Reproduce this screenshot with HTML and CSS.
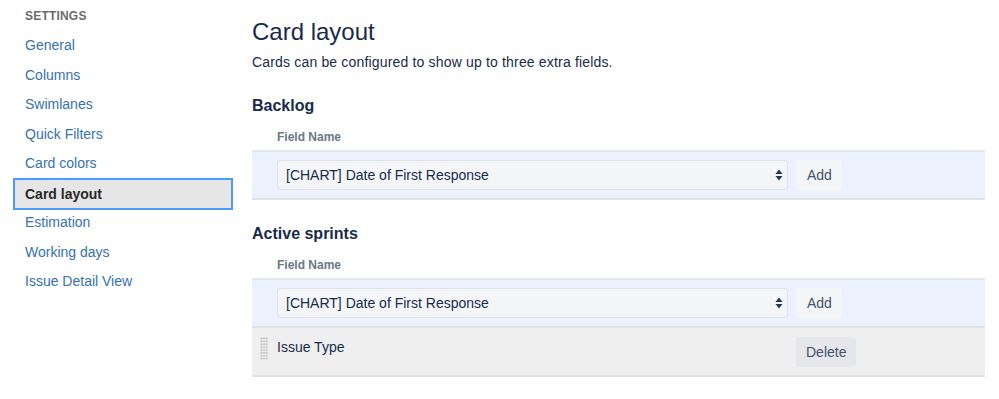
FILE: index.html
```html
<!DOCTYPE html>
<html lang="en">
<head>
    <meta charset="UTF-8">
    <title>Card layout</title>
    <link rel="stylesheet" href="styles.css">
</head>
<body>
    <div class="page">
        <nav class="sidebar">
            <h4 class="sidebar-title">Settings</h4>
            <a class="nav-item" href="#">General</a>
            <a class="nav-item" href="#">Columns</a>
            <a class="nav-item" href="#">Swimlanes</a>
            <a class="nav-item" href="#">Quick Filters</a>
            <a class="nav-item" href="#">Card colors</a>
            <a class="nav-item selected" href="#">Card layout</a>
            <a class="nav-item" href="#">Estimation</a>
            <a class="nav-item" href="#">Working days</a>
            <a class="nav-item" href="#">Issue Detail View</a>
        </nav>

        <main class="content">
            <h1>Card layout</h1>
            <p class="intro">Cards can be configured to show up to three extra fields.</p>

            <h2>Backlog</h2>
            <div class="field-label">Field Name</div>
            <div class="row add-row">
                <div class="select">
                    <span>[CHART] Date of First Response</span>
                    <svg width="8" height="12" viewBox="0 0 8 12"><path d="M4 0.5 L7.5 5 H0.5 Z M4 11.5 L7.5 7 H0.5 Z" fill="#253858"/></svg>
                </div>
                <button class="btn">Add</button>
            </div>

            <h2>Active sprints</h2>
            <div class="field-label">Field Name</div>
            <div class="row add-row">
                <div class="select">
                    <span>[CHART] Date of First Response</span>
                    <svg width="8" height="12" viewBox="0 0 8 12"><path d="M4 0.5 L7.5 5 H0.5 Z M4 11.5 L7.5 7 H0.5 Z" fill="#253858"/></svg>
                </div>
                <button class="btn">Add</button>
            </div>
            <div class="row field-row">
                <span class="handle"></span>
                <span class="field-name">Issue Type</span>
                <button class="btn">Delete</button>
            </div>
        </main>
    </div>
</body>
</html>
```

FILE: styles.css
```css
body { margin: 0; font-family: "Liberation Sans", Arial, sans-serif; font-size: 14px; color: #172b4d; background: #fff; }
.page { display: flex; }

.sidebar { width: 239px; padding-left: 13px; flex-shrink: 0; }
.sidebar-title { margin: 0; height: 31.25px; line-height: 33px; padding-left: 12px; font-size: 12px; font-weight: bold; text-transform: uppercase; color: #6b6b6b; letter-spacing: 0.2px; }
.nav-item { display: block; box-sizing: border-box; width: 220px; height: 29.5px; line-height: 25.5px; padding: 0 10px; border: 2px solid transparent; color: #3572b0; text-decoration: none; font-size: 14px; }
.nav-item.selected { background: #e6e6e6; border-color: #4c9aff; color: #292929; font-weight: bold; height: 32px; line-height: 28px; margin: -1.25px 0; }

.content { flex: 1; margin-right: 14px; }
h1 { margin: 17px 0 0; font-size: 24px; font-weight: normal; line-height: 30px; color: #172b4d; }
.intro { margin: 5px 0 0; line-height: 20px; letter-spacing: 0.17px; }
h2 { margin: 24px 0 0; font-size: 16px; font-weight: bold; line-height: 20px; color: #172b4d; }
.field-label { margin: 13px 0 0 25px; font-size: 12px; font-weight: bold; line-height: 16px; color: #6b778c; }

.row { display: flex; align-items: center; box-sizing: border-box; border-bottom: 2px solid #dfe1e6; }
.add-row { margin-top: 5px; height: 50px; border-top: 2px solid #e4e7ec; background: #ebf2fe; padding-left: 25px; }
.field-row { height: 49px; background: #efefef; align-items: flex-start; padding: 9px 0 0 8px; }

.select { box-sizing: border-box; width: 511px; height: 30px; display: flex; align-items: center; justify-content: space-between; padding: 0 4px 0 8px; background: #f4f5f7; border: 1px solid #dfe1e6; border-radius: 4px; }
.btn { margin-left: 9px; height: 31px; padding: 0 10px; border: none; border-radius: 3px; background: #f4f5f7; color: #42526e; font-family: inherit; font-size: 14px; }

.handle { width: 8px; height: 23px; background-image: radial-gradient(circle, #c8c8c8 0.9px, transparent 1.1px); background-size: 2.7px 2.9px; }
.field-name { width: 519px; margin-left: 9px; line-height: 20px; }
.field-row .btn { margin-left: 0; height: 30px; background: #e6e7eb; }
```
